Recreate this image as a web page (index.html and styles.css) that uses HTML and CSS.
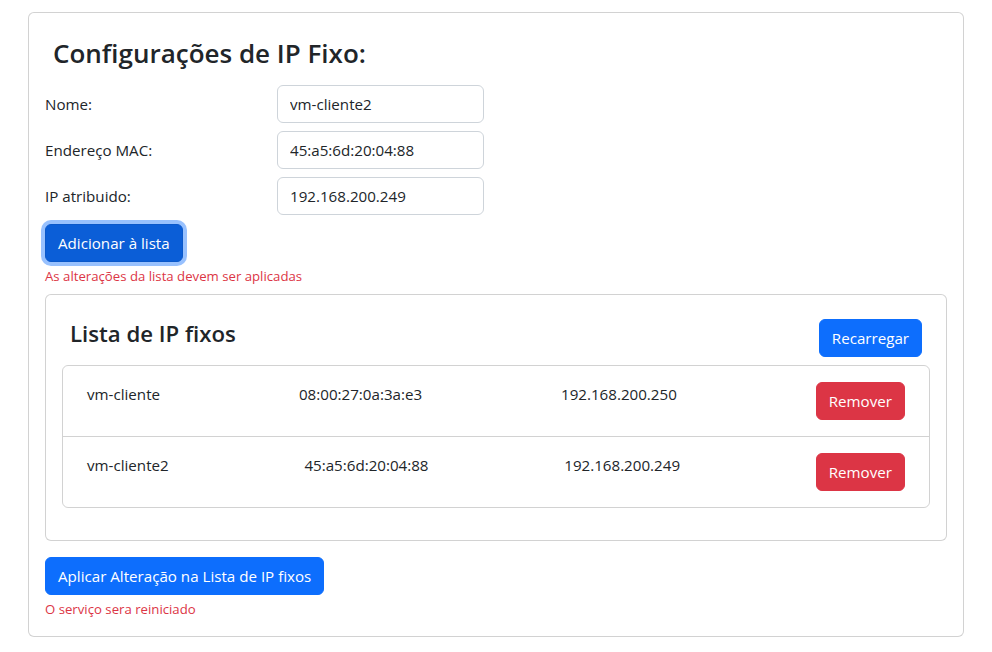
FILE: index.html
```html
<!DOCTYPE html>
<html lang="pt">
<head>
<meta charset="utf-8">
<title>Configurações de IP Fixo</title>
<link rel="stylesheet" href="styles.css">
</head>
<body>
<div class="page">
  <div class="card">
    <div class="card-body">
      <div class="title-wrap"><h3 class="title">Configurações de IP Fixo:</h3></div>
      <div class="form-row">
        <label class="label" for="nome">Nome:</label>
        <input class="input" id="nome" type="text" value="vm-cliente2">
      </div>
      <div class="form-row">
        <label class="label" for="mac">Endereço MAC:</label>
        <input class="input" id="mac" type="text" value="45:a5:6d:20:04:88">
      </div>
      <div class="form-row">
        <label class="label" for="ip">IP atribuido:</label>
        <input class="input" id="ip" type="text" value="192.168.200.249">
      </div>
      <button class="btn btn-primary btn-focus" type="button">Adicionar à lista</button>
      <div class="form-text">As alterações da lista devem ser aplicadas</div>

      <div class="card inner-card">
        <div class="card-body">
          <div class="list-header">
            <h4 class="list-title">Lista de IP fixos</h4>
            <button class="btn btn-primary" type="button">Recarregar</button>
          </div>
          <ul class="list-group">
            <li class="list-item">
              <span>vm-cliente</span>
              <span>08:00:27:0a:3a:e3</span>
              <span>192.168.200.250</span>
              <button class="btn btn-danger" type="button">Remover</button>
            </li>
            <li class="list-item">
              <span>vm-cliente2</span>
              <span>45:a5:6d:20:04:88</span>
              <span>192.168.200.249</span>
              <button class="btn btn-danger" type="button">Remover</button>
            </li>
          </ul>
        </div>
      </div>

      <button class="btn btn-primary apply" type="button">Aplicar Alteração na Lista de IP fixos</button>
      <div class="form-text">O serviço sera reiniciado</div>
    </div>
  </div>
</div>
</body>
</html>
```

FILE: styles.css
```css
* { box-sizing: border-box; }

body {
  margin: 0;
  font-family: "Segoe UI", "Open Sans", "Liberation Sans", sans-serif;
  font-size: 15.15px;
  line-height: 1.5;
  color: #212529;
  background: #fff;
}

.page {
  padding: 12px 28px 0 28px;
}

.card {
  border: 1px solid rgba(0, 0, 0, 0.175);
  border-radius: 6px;
  background: #fff;
}

.card-body {
  padding: 16px;
}

.title-wrap {
  padding: 8px;
  margin-bottom: 8px;
}

.title {
  margin: 0;
  font-size: 26px;
  font-weight: 600;
  line-height: 32px;
  color: #212529;
}

.form-row {
  display: grid;
  grid-template-columns: 232px 207px;
  align-items: center;
  margin-bottom: 8px;
}

.label {
  line-height: 24px;
}

.input {
  height: 38px;
  padding: 6px 12px;
  font: inherit;
  color: #212529;
  border: 1px solid #ced4da;
  border-radius: 6px;
  background: #fff;
  width: 207px;
}

.btn {
  display: inline-block;
  height: 38px;
  padding: 6px 12px;
  font: inherit;
  line-height: 24px;
  border: 1px solid transparent;
  border-radius: 6px;
  color: #fff;
  cursor: pointer;
}

.btn-primary {
  background: #0d6efd;
  border-color: #0d6efd;
}

.btn-focus {
  background: #0b5ed7;
  border-color: #0a58ca;
  box-shadow: 0 0 0 4px rgba(49, 132, 253, 0.5);
  margin-top: 1px;
}

.btn-danger {
  background: #dc3545;
  border-color: #dc3545;
}

.form-text {
  margin-top: 4px;
  font-size: 13.2px;
  line-height: 21px;
  color: #dc3545;
}

.inner-card {
  margin-top: 7px;
}

.list-header {
  display: flex;
  justify-content: space-between;
  align-items: center;
  padding: 8px;
}

.list-title {
  margin: 0 0 8px 0;
  font-size: 22.2px;
  font-weight: 600;
  line-height: 1.2;
}

.list-group {
  list-style: none;
  margin: 0 0 16px 0;
  padding: 0;
  border: 1px solid rgba(0, 0, 0, 0.175);
  border-radius: 6px;
}

.list-item {
  display: flex;
  justify-content: space-between;
  align-items: flex-start;
  padding: 16px 24px;
}

.list-item + .list-item {
  border-top: 1px solid rgba(0, 0, 0, 0.175);
}

.list-item span {
  line-height: 24px;
}

.apply {
  margin-top: 16px;
}
```
